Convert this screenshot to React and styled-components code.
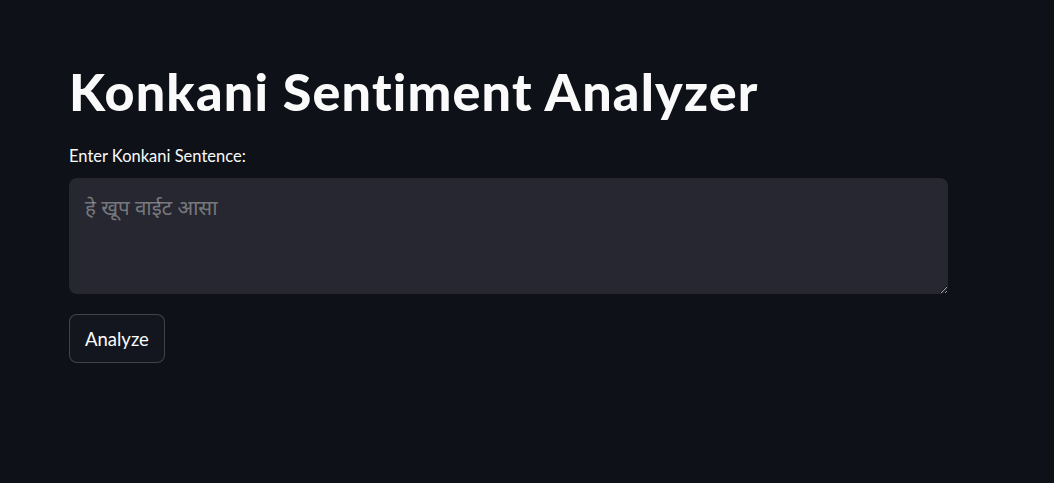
import React from "react";
import styled, { createGlobalStyle } from "styled-components";

const Global = createGlobalStyle`
  html, body { margin: 0; padding: 0; background: #0e1117; }
  body { font-family: Lato, "Noto Sans", sans-serif; color: #fafafa; }
`;

const Page = styled.main`
  box-sizing: border-box;
  width: 1054px;
  height: 483px;
  padding: 58px 106px 0 69px;
  display: flex;
  flex-direction: column;
`;

const Title = styled.h1`
  margin: 0;
  font-family: Lato, "Noto Sans", sans-serif;
  font-weight: 900;
  font-size: 52px;
  line-height: 66px;
  letter-spacing: 1.2px;
  color: #fafafa;
`;

const Field = styled.label`
  margin-top: 22px;
  display: flex;
  flex-direction: column;
  gap: 12px;
`;

const LabelText = styled.span`
  font-size: 16.5px;
  line-height: 20px;
  color: #fafafa;
`;

const TextArea = styled.textarea`
  box-sizing: border-box;
  width: 879px;
  height: 116px;
  padding: 14px 16px;
  border: none;
  border-radius: 8px;
  background: #262730;
  color: #fafafa;
  font-family: "Noto Sans", "Liberation Sans", sans-serif;
  font-size: 20.5px;
  line-height: 30px;
  resize: vertical;
  outline: none;
  &::placeholder { color: rgba(250, 250, 250, 0.4); }
`;

const Button = styled.button`
  margin-top: 20px;
  align-self: flex-start;
  box-sizing: border-box;
  height: 49px;
  padding: 0 15px;
  border: 1px solid rgba(250, 250, 250, 0.2);
  border-radius: 8px;
  background: #13161e;
  color: #fafafa;
  font-family: Lato, "Noto Sans", sans-serif;
  font-size: 18.5px;
  cursor: pointer;
`;

export default function App() {
  return (
    <>
      <Global />
      <Page>
        <Title>Konkani Sentiment Analyzer</Title>
        <Field>
          <LabelText>Enter Konkani Sentence:</LabelText>
          <TextArea placeholder="हे खूप वाईट आसा" />
        </Field>
        <Button>Analyze</Button>
      </Page>
    </>
  );
}
